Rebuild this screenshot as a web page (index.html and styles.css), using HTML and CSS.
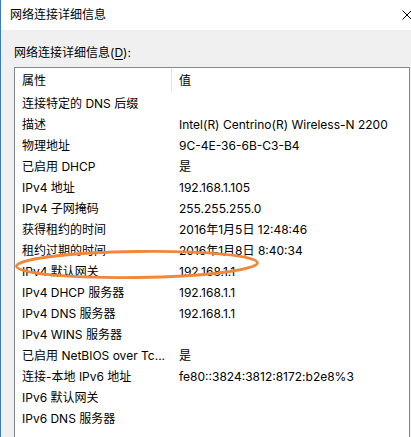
FILE: index.html
```html
<!DOCTYPE html>
<html lang="zh-CN">
<head>
<meta charset="utf-8">
<title>网络连接详细信息</title>
<link rel="stylesheet" href="styles.css">
</head>
<body>
<div class="window">
  <div class="titlebar">
    <span class="title">网络连接详细信息</span>
    <svg class="close" width="10" height="10" viewBox="0 0 10 10"><path d="M0.5 0.5 L9.5 9.5 M9.5 0.5 L0.5 9.5" stroke="#000" stroke-width="1" fill="none"/></svg>
  </div>
  <div class="content">
    <div class="label">网络连接详细信息(<u>D</u>):</div>
    <div class="listbox">
      <div class="header">
        <div class="hcell sep">属性</div>
        <div class="hcell">值</div>
      </div>
      <div class="rows">
        <div class="row"><span class="k">连接特定的 DNS 后缀</span><span class="v"></span></div>
        <div class="row"><span class="k">描述</span><span class="v">Intel(R) Centrino(R) Wireless-N 2200</span></div>
        <div class="row"><span class="k">物理地址</span><span class="v">9C-4E-36-6B-C3-B4</span></div>
        <div class="row"><span class="k">已启用 DHCP</span><span class="v">是</span></div>
        <div class="row"><span class="k">IPv4 地址</span><span class="v">192.168.1.105</span></div>
        <div class="row"><span class="k">IPv4 子网掩码</span><span class="v">255.255.255.0</span></div>
        <div class="row"><span class="k">获得租约的时间</span><span class="v">2016年1月5日 12:48:46</span></div>
        <div class="row"><span class="k">租约过期的时间</span><span class="v">2016年1月8日 8:40:34</span></div>
        <div class="row"><span class="k">IPv4 默认网关</span><span class="v">192.168.1.1</span></div>
        <div class="row"><span class="k">IPv4 DHCP 服务器</span><span class="v">192.168.1.1</span></div>
        <div class="row"><span class="k">IPv4 DNS 服务器</span><span class="v">192.168.1.1</span></div>
        <div class="row"><span class="k">IPv4 WINS 服务器</span><span class="v"></span></div>
        <div class="row"><span class="k">已启用 NetBIOS over Tc...</span><span class="v">是</span></div>
        <div class="row"><span class="k">连接-本地 IPv6 地址</span><span class="v">fe80::3824:3812:8172:b2e8%3</span></div>
        <div class="row"><span class="k">IPv6 默认网关</span><span class="v"></span></div>
        <div class="row"><span class="k">IPv6 DNS 服务器</span><span class="v"></span></div>
      </div>
    </div>
  </div>
  <svg class="mark" width="246" height="32" viewBox="0 0 246 32"><ellipse cx="123" cy="15.5" rx="120.5" ry="13" fill="none" stroke="#f0873a" stroke-width="2.8" transform="rotate(-0.8 123 15.5)"/></svg>
</div>
</body>
</html>
```

FILE: styles.css
```css
html, body {
  margin: 0;
  padding: 0;
}
body {
  width: 411px;
  height: 437px;
  overflow: hidden;
  background: #f0f0f0;
  font-family: Inter, "Noto Sans CJK SC", sans-serif;
  font-size: 12px;
  color: #000;
}
.window {
  position: relative;
  height: 437px;
  border-left: 1px solid #3a7cc4;
  display: flex;
  flex-direction: column;
  overflow: hidden;
}
.titlebar {
  height: 30px;
  flex: none;
  background: #fff;
  display: flex;
  align-items: center;
  justify-content: space-between;
  padding-left: 9px;
}
.title {
  font-size: 12px;
  line-height: 16px;
}
.close {
  margin-right: -1px;
  margin-top: -1px;
}
.content {
  flex: 1;
  display: flex;
  flex-direction: column;
  padding: 14px 1px 0 13px;
  background: #f0f0f0;
}
.label {
  line-height: 16px;
  height: 16px;
  margin-top: 1px;
  margin-bottom: 6px;
}
.label u {
  text-decoration-thickness: 1px;
  text-underline-offset: 2px;
}
.listbox {
  flex: 1;
  background: #fff;
  border: 1px solid #828790;
  border-bottom: none;
}
.header {
  display: grid;
  grid-template-columns: 157px 1fr;
  height: 24px;
}
.hcell {
  padding-left: 7px;
  padding-top: 2px;
  line-height: 22px;
}
.hcell.sep {
  border-right: 1px solid #e5e5e5;
}
.rows {
  padding-top: 1px;
}
.row {
  display: grid;
  grid-template-columns: 157px 1fr;
  height: 21px;
  line-height: 21px;
  white-space: nowrap;
}
.k {
  padding-left: 7px;
  overflow: hidden;
}
.v {
  padding-left: 7px;
}
.mark {
  position: absolute;
  left: 13px;
  top: 249px;
  pointer-events: none;
}
```
